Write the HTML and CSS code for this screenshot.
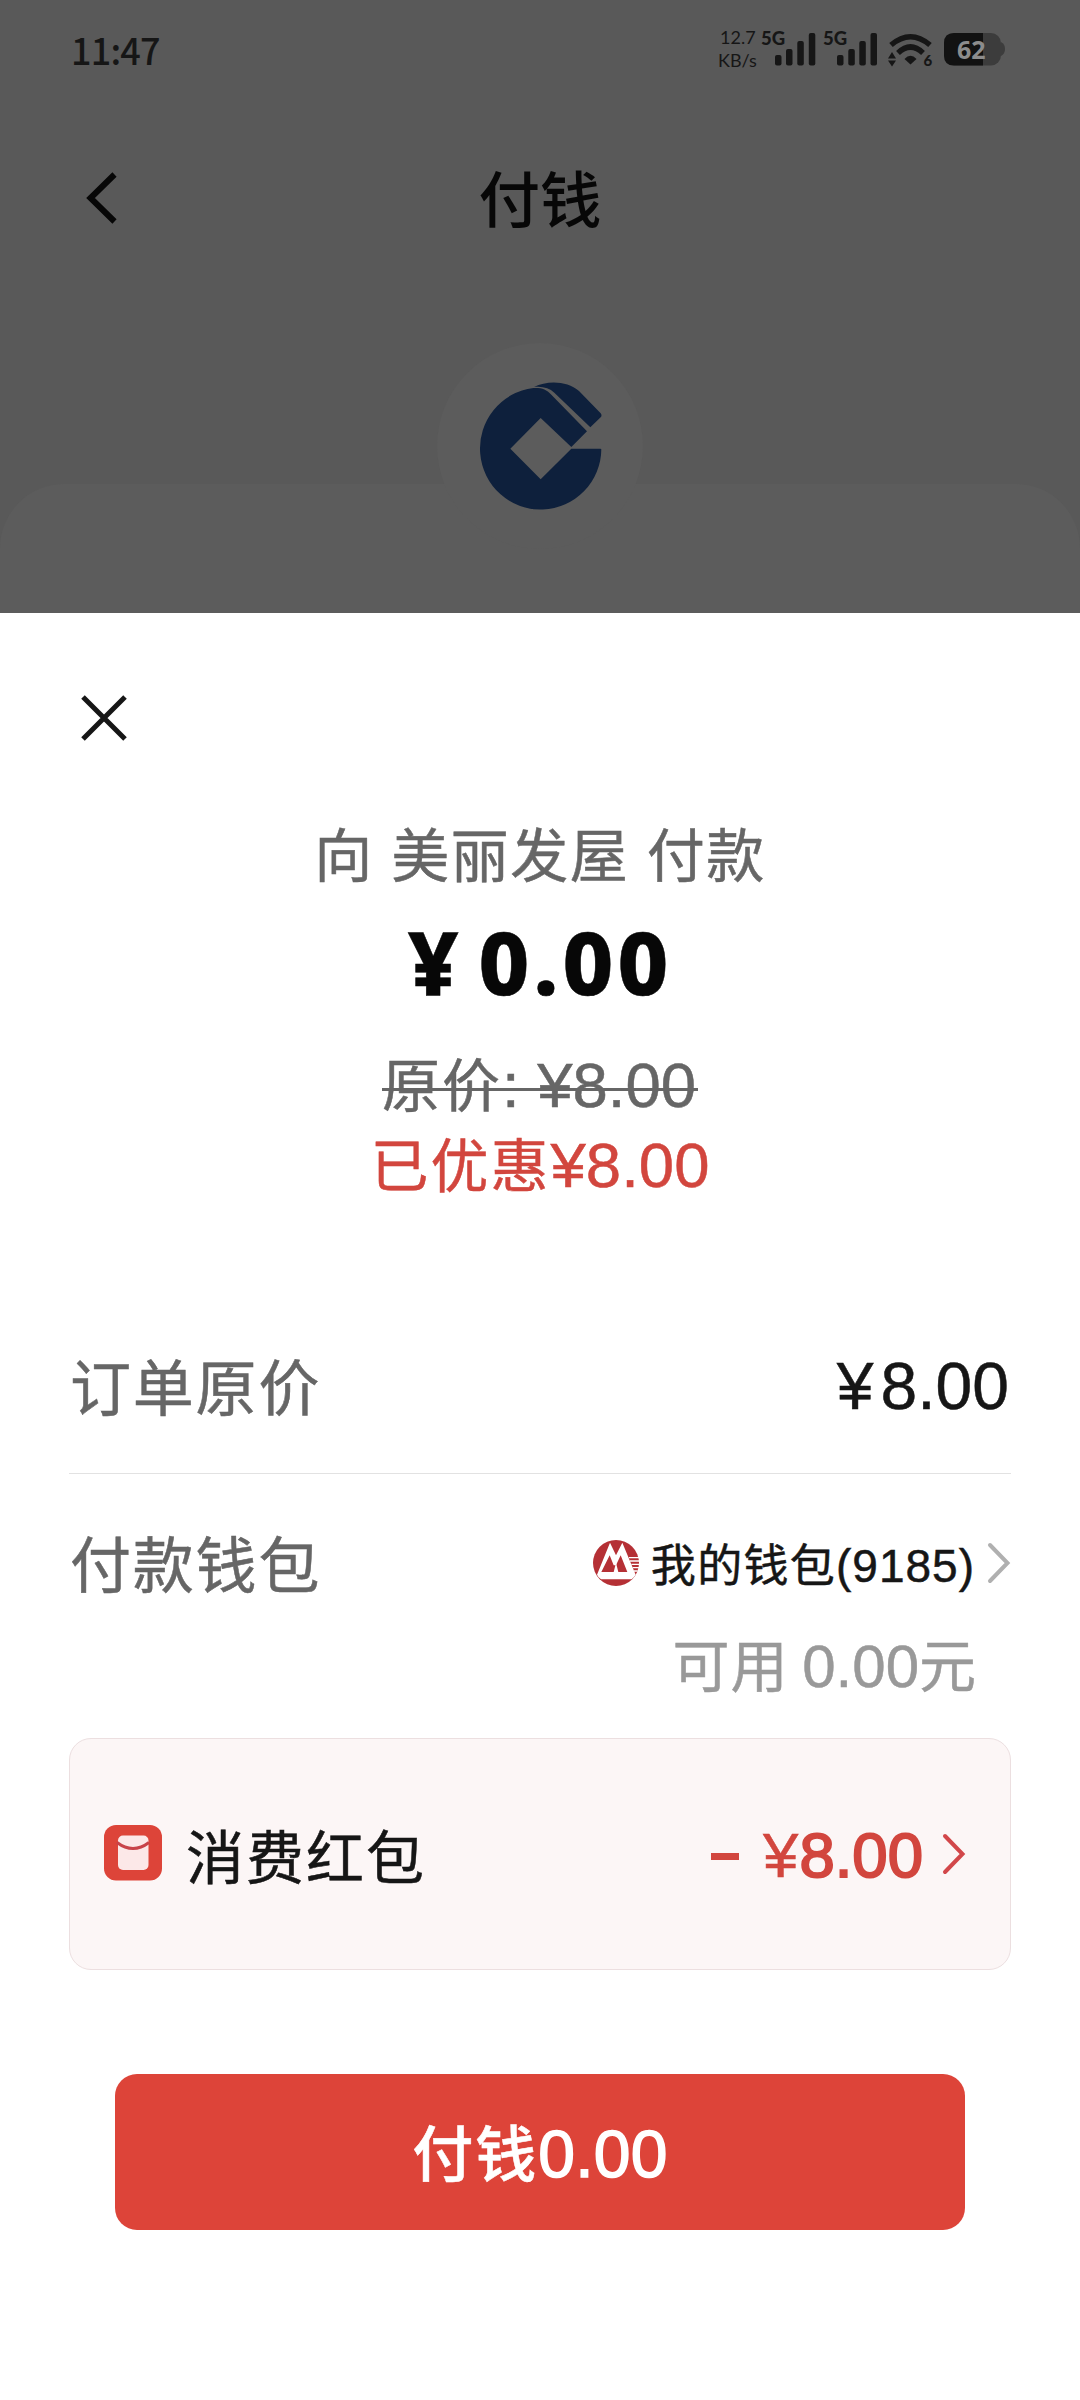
FILE: index.html
```
<!DOCTYPE html>
<html lang="zh-CN">
<head>
<meta charset="utf-8">
<title>付钱</title>
<link rel="stylesheet" href="styles.css">
</head>
<body>
<div class="screen">
  <div class="backdrop">
    <div class="statusbar">
      <span class="clock">11:47</span>
      <div class="speed"><span class="speed-value">12.7</span><span class="speed-unit">KB/s</span></div>
      <svg class="status-icons" viewBox="760 20 246 56" width="246" height="56">
        <g fill="#161616">
          <text class="net" x="761" y="45">5G</text>
          <rect x="775" y="55" width="6.5" height="10.5" rx="2"/><rect x="786" y="49" width="6.5" height="16.5" rx="2"/><rect x="797.3" y="41" width="6.5" height="24.5" rx="2"/><rect x="808.8" y="33" width="6.5" height="32.5" rx="2"/>
          <text class="net" x="823" y="45">5G</text>
          <rect x="837" y="55" width="6.5" height="10.5" rx="2"/><rect x="848.3" y="49" width="6.5" height="16.5" rx="2"/><rect x="859.3" y="41" width="6.5" height="24.5" rx="2"/><rect x="870.5" y="33" width="6.5" height="32.5" rx="2"/>
          <path d="M904.5 59Q910.5 52.5 916.5 59L910.5 64.5Z"/>
          <path d="M888 58.5L892 52L896 58.5ZM888 60.5L892 66.5L896 60.5Z"/>
          <text class="gen" x="923.5" y="66">6</text>
        </g>
        <g fill="none" stroke="#161616" stroke-width="5.5">
          <path d="M891 45Q910.5 28.5 930 45"/><path d="M898 53Q910.5 41 923 53"/>
        </g>
        <rect x="944" y="33" width="57" height="32.5" rx="10" fill="#3c3c3c"/>
        <path d="M1001 42Q1005 44 1005 49Q1005 54 1001 56Z" fill="#3c3c3c"/>
        <path d="M954 33H983V65.5H954Q944 65.5 944 55.5V43Q944 33 954 33Z" fill="#121212"/>
        <text class="level" x="957" y="58.5">62</text>
      </svg>
    </div>
    <div class="navbar">
      <svg class="back" viewBox="0 0 32 52" width="32" height="52"><path d="M28.5 2.5L4.5 26L28.5 49.5" fill="none" stroke="#070707" stroke-width="6"/></svg>
      <h1 class="title">付钱</h1>
    </div>
    <div class="panel">
      <div class="bank">
        <svg viewBox="238 186 366 386" width="122" height="128.7" fill="#0e203c">
          <path d="M602 387A182 183 0 1 1 398 204C425 203 436 208 452 224L559 334L512 381L420 294L329 386L420 478L512 386H599Q602 386 602 389Z"/>
          <path d="M400 201C440 180 500 182 535 213L600 280Q605 287 600 292L569 322L461 218C446 204 425 198 400 201Z"/>
        </svg>
      </div>
    </div>
  </div>

  <main class="sheet">
    <svg class="close" viewBox="0 0 46 46" width="46" height="46"><path d="M2 2L44 44M44 2L2 44" fill="none" stroke="#161616" stroke-width="5"/></svg>
    <p class="payee">向 美丽发屋 付款</p>
    <p class="amount"><span class="amount-sign">¥</span>0.00</p>
    <p class="original"><span class="struck">原价<span class="num">: ¥8.00</span></span></p>
    <p class="saved">已优惠<span class="num">¥8.00</span></p>

    <div class="row order">
      <span class="label">订单原价</span>
      <span class="price"><span class="price-sign">¥</span>8.00</span>
    </div>
    <div class="row wallet">
      <span class="label">付款钱包</span>
      <div class="wallet-pick">
        <svg class="wallet-logo" viewBox="96 660 138 138" width="46" height="46">
          <circle cx="165" cy="729" r="69" fill="#b53035"/>
          <path d="M147 668L108 764Q112 773 120 778H212Q219 772 224 764L184 668L165 706Z" fill="#fff"/>
          <path d="M146 706L121 756H199L179 706L165 736L158 736Z" fill="#b53035"/>
          <path d="M158 756L165 728L172 756Z" fill="#fff"/>
          <path d="M204 713H236M207 723H236M211 733H236M215 743H236M219 753H230" stroke="#fff" stroke-width="4"/>
        </svg>
        <span class="wallet-name">我的钱包<span class="num">(9185)</span></span>
        <svg class="chevron" viewBox="0 0 24 42" width="24" height="42"><path d="M3 3L20.5 21L3 39" fill="none" stroke="#b0b0b0" stroke-width="4" stroke-linecap="round"/></svg>
      </div>
    </div>
    <p class="available">可用 <span class="num">0.00</span>元</p>

    <div class="coupon">
      <svg class="coupon-icon" viewBox="0 0 58 56" width="58" height="56">
        <rect width="58" height="55.5" rx="12" fill="#dd4439"/>
        <rect x="14" y="10.5" width="30.5" height="34.5" rx="5" fill="#fce8e8"/>
        <path d="M13 17.500Q29 29.5 45 17.5" fill="none" stroke="#c84349" stroke-width="3"/>
      </svg>
      <span class="coupon-name">消费红包</span>
      <span class="minus"></span>
      <span class="coupon-value"><span class="coupon-sign">¥</span>8.00</span>
      <svg class="coupon-chevron" viewBox="0 0 24 42" width="24" height="42"><path d="M3 3L20.5 21L3 39" fill="none" stroke="#d2474a" stroke-width="4" stroke-linecap="round"/></svg>
    </div>

    <button class="pay">付钱<span class="num">0.00</span></button>
  </main>
</div>
</body>
</html>
```
FILE: styles.css
```
* { box-sizing: border-box; }
body { margin: 0; background: #fff; font-family: "Noto Sans CJK SC", sans-serif; }
p, h1 { margin: 0; }
svg { display: block; flex: none; }
.screen { width: 1080px; height: 2400px; overflow: hidden; display: flex; flex-direction: column; }

.backdrop { height: 613px; flex: none; background: #595959; overflow: hidden; }
.statusbar { height: 100px; padding: 20px 74px 0 71px; display: flex; align-items: flex-start; color: #161616; }
.clock { font: 500 36px/42px "Noto Sans CJK SC", sans-serif; letter-spacing: -0.8px; margin-top: 8px; }
.speed { margin: 6px 0 0 auto; width: 42px; display: flex; flex-direction: column; font: 18px/23px Lato, sans-serif; }
.speed-value { padding-left: 2px; }
.net { font: 900 18.5px Lato, sans-serif; }
.gen { font: 900 15px Lato, sans-serif; }
.level { font: 700 25px "Open Sans", sans-serif; fill: #8c8c8c; }
.navbar { height: 100px; margin-top: 50px; padding: 22px 86px 0; display: grid; grid-template-columns: 32px 1fr 32px; align-items: start; }
.title { font-size: 61.5px; font-weight: 500; line-height: 60px; margin-top: -5px; text-align: center; color: #070707; }
.panel { margin-top: 234px; height: 140px; border-radius: 64px 64px 0 0; background: #5c5c5c; }
.bank { width: 206px; height: 206px; margin: 0 auto; position: relative; top: -141px; border-radius: 50%; background: #5c5c5c; display: flex; align-items: center; justify-content: center; padding-left: 1px; }

.sheet { flex: 1; background: #fff; padding: 82px 69px 0; display: flex; flex-direction: column; -webkit-text-stroke: 0.5px currentColor; }
.num, .price, .coupon-value { font-family: "Liberation Sans", Arial, sans-serif; }
.num { line-height: 0; }
.close { margin-left: 12px; }
.payee { margin-top: 76px; font-size: 58px; line-height: 70px; letter-spacing: 1.5px; word-spacing: 3px; text-align: center; color: #666; }
.amount { margin-top: 29px; font: 800 88px/90px "Noto Sans", sans-serif; letter-spacing: 4px; text-align: center; color: #070707; }
.amount-sign { margin-right: 16px; }
.original { margin-top: 36px; font-size: 58px; line-height: 80px; text-align: center; letter-spacing: 2px; color: #666; }
.struck { position: relative; display: inline-block; padding: 0 2px 0 0; }
.struck::after { content: ""; position: absolute; left: 0; right: 0; top: 46px; height: 3px; background: #666; }
.original .num, .saved .num { font-size: 63.5px; letter-spacing: 0; }
.saved { font-size: 58px; line-height: 80px; letter-spacing: 2px; text-align: center; color: #d2463e; }
.row { display: flex; justify-content: space-between; height: 80px; line-height: 82px; }
.label { font-size: 61px; letter-spacing: 1.8px; padding-left: 1px; color: #666; }
.order { margin-top: 142px; height: 130px; border-bottom: 1px solid #e2e2e2; }
.price { font-size: 66px; line-height: 85px; color: #161616; padding-right: 2px; }
.price-sign { margin-right: 7px; }
.wallet { margin-top: 47px; }
.wallet-pick { display: flex; align-items: center; height: 83px; }
.wallet-name { margin-left: 12px; font-size: 45px; letter-spacing: 1.3px; color: #161616; }
.wallet-name .num { font-size: 46px; letter-spacing: 1px; }
.chevron { margin-left: 12px; }
.available { margin-top: 26px; padding-right: 34px; font-size: 57px; line-height: 70px; letter-spacing: 1px; text-align: right; color: #999; }
.available .num { font-size: 60px; letter-spacing: 0; }
.coupon { margin-top: 41px; height: 232px; padding: 0 44px 0 34px; display: flex; align-items: center; background: #fcf6f6; border: 1px solid #ecdfe0; border-radius: 22px; }
.coupon-icon { margin-bottom: 2px; }
.coupon-name { margin-left: 24px; font-size: 58px; letter-spacing: 2px; color: #161616; }
.minus { margin: 4px 0 0 auto; width: 28px; height: 7px; background: #d2463e; }
.coupon-value { margin: 2px 0 0 24px; font-size: 63.5px; color: #d2463e; -webkit-text-stroke: 2px #d2463e; }
.coupon-sign { -webkit-text-stroke: 0.5px #d2463e; margin-right: 1px; }
.coupon-chevron { margin-left: 19px; }
.pay { margin: 104px 46px 0; height: 156px; padding: 0 0 3px; border: 0; border-radius: 22px; background: #dd4439; color: #fff; font: 500 61px/80px "Noto Sans CJK SC", sans-serif; letter-spacing: 2px; }
.pay .num { font-size: 66px; letter-spacing: 0.3px; -webkit-text-stroke: 1.5px #fff; line-height: 0; }
```
